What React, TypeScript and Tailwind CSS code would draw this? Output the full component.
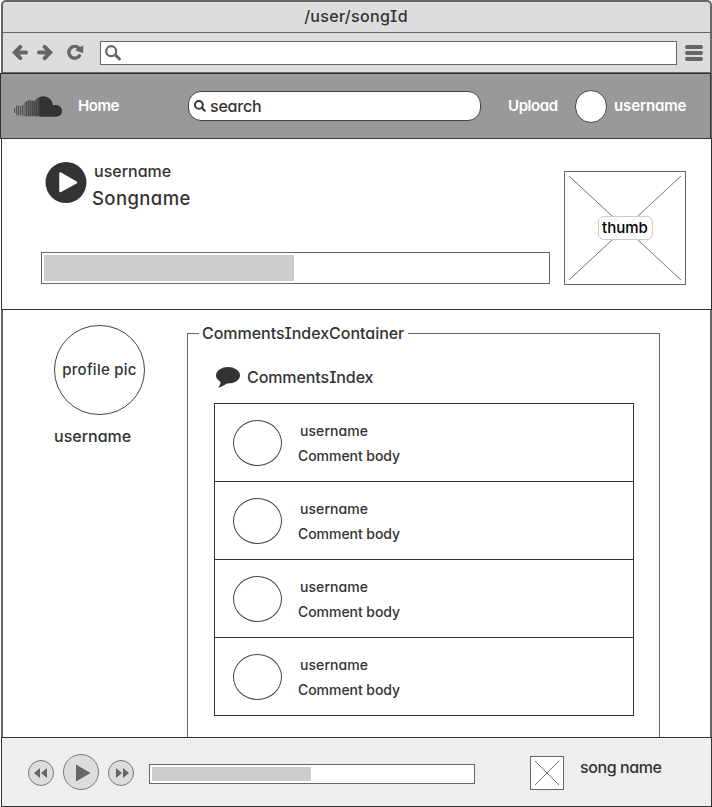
import React from "react";

const inkFont = {
  fontFamily: 'Inter, "Open Sans", sans-serif',
  fontFeatureSettings: '"cv11", "cv08", "kern"',
};

function Label({ className = "font-medium", children }: { className?: string; children: React.ReactNode }) {
  return <span className={`block whitespace-nowrap ${className}`}>{children}</span>;
}

function TitleBar() {
  return (
    <div className="h-[31px] border-b border-[#666] pt-1 pr-px text-center">
      <Label className="text-base leading-5 font-medium tracking-[0.3px]">/user/songId</Label>
    </div>
  );
}

function Toolbar() {
  return (
    <div className="flex h-10 items-start border-b border-[#666] pt-2 pl-[9px] text-[#666]">
      <svg className="mt-[3px]" width="16" height="17" viewBox="0 0 16 17" fill="none" stroke="currentColor" strokeWidth="4" strokeLinecap="round">
        <path d="M14 8.500H5" />
        <path d="M8.300 2.900 2.800 8.500l5.500 5.600" />
      </svg>
      <svg className="mt-[3px] ml-[9px]" width="16" height="17" viewBox="0 0 16 17" fill="none" stroke="currentColor" strokeWidth="4" strokeLinecap="round">
        <path d="M2 8.500h9" />
        <path d="m7.700 2.900 5.500 5.600-5.500 5.600" />
      </svg>
      <svg className="mt-[3px] ml-[14px]" width="17" height="17" viewBox="0 0 17 17">
        <path d="M12.500 11.800A5.900 5.900 0 1 1 12 4.200" fill="none" stroke="currentColor" strokeWidth="3.400" strokeLinecap="round" />
        <path d="M16.200 1.300v7.900L8 6.200z" fill="currentColor" />
      </svg>
      <div className="ml-4 h-6 w-[577px] border border-[#666] bg-white pt-[3px] pl-1">
        <svg width="17" height="17" viewBox="0 0 17 17" fill="none" stroke="currentColor" strokeLinecap="round">
          <circle cx="6.200" cy="6.200" r="5" strokeWidth="2.200" />
          <path d="m10.500 10.200 4 3.800" strokeWidth="3" />
        </svg>
      </div>
      <div className="mt-1 ml-2 flex flex-col gap-0.5">
        {[0, 1, 2].map((n) => (
          <div key={n} className="h-1 w-[18px] rounded-full bg-[#666]" />
        ))}
      </div>
    </div>
  );
}

function CloudLogo() {
  const bars = [
    [12, 17], [9.5, 19], [9.5, 19.5], [10, 19.5], [9, 19.5],
  ];
  return (
    <svg className="mt-[22px] ml-[13px]" width="48" height="21" viewBox="0 0 48 21">
      <defs>
        <linearGradient id="wave" x1="0" x2="1">
          <stop offset="0" stopColor="#707070" />
          <stop offset="1" stopColor="#4c4c4c" />
        </linearGradient>
      </defs>
      <path d="M9.500 8.500 11 6C14 3.800 17 4 20.500 5.300L22.500 2.800 26 1V20.300H9.500Z" fill="url(#wave)" />
      {bars.map(([top, bottom], i) => (
        <rect key={i} x={i * 2 + 0.2} y={top} width="1" height={bottom - top} fill="#444" />
      ))}
      <path d="M12.500 5.500V20.300M14.500 4.600V20.300M16.500 4.300V20.300M18.500 4.500V20.300M20.500 5V20.300M22.500 2.800V20.300M24.500 1.600V20.300" stroke="#444" strokeWidth="0.700" />
      <path d="M25.500 1C32 -1.400 38.300 2.500 39 9.400C44 7.900 48 11 48 15C48 18.500 45.500 20.700 42 20.700H25.500Z" fill="#333" />
    </svg>
  );
}

function Header() {
  return (
    <header className="-ml-[3px] flex h-[66px] w-[711px] shrink-0 items-start border border-[#333] bg-[#999] text-white">
      <CloudLogo />
      <Label className="mt-[22px] ml-4 w-[110px] text-[15px] leading-5 font-semibold tracking-[-0.45px]">Home</Label>
      <div className="mt-[17px] flex h-[30px] w-[293px] rounded-[13px] border border-[#444] bg-white pl-[5px] text-[#333]">
        <svg className="mt-2" width="12" height="12" viewBox="0 0 12 12" fill="none" stroke="currentColor" strokeWidth="2" strokeLinecap="round">
          <circle cx="4.900" cy="4.900" r="3.900" />
          <path d="m8 8 2.800 2.700" />
        </svg>
        <Label className="mt-1 ml-1 text-base leading-5 font-medium tracking-[-0.2px]">search</Label>
      </div>
      <Label className="mt-[22px] ml-[27px] w-[67px] text-[15px] leading-5 font-semibold tracking-[-0.4px]">Upload</Label>
      <div className="mt-4 h-[33px] w-8 rounded-full border border-[#444] bg-white" />
      <Label className="mt-[22px] ml-[7px] text-[15px] leading-5 font-semibold tracking-[-0.12px]">username</Label>
    </header>
  );
}

function SongPanel() {
  return (
    <section className="-mt-px -ml-[2px] flex h-[172px] w-[711px] shrink-0 border border-[#333] bg-white">
      <div className="ml-[39px] w-[509px] shrink-0">
        <div className="flex h-[113px]">
          <svg className="mt-[22px] ml-1" width="42" height="42" viewBox="0 0 42 42">
            <circle cx="21" cy="21.500" r="20.500" fill="#333" />
            <path d="M15.500 12.500v17.500L31 21.500z" fill="#fff" stroke="#fff" strokeWidth="2.500" strokeLinejoin="round" />
          </svg>
          <div className="ml-[5px] pt-[22px]">
            <Label className="ml-0.5 text-base leading-5 font-medium">username</Label>
            <Label className="mt-[5px] text-[18.5px] leading-6 font-medium tracking-[0.4px]">Songname</Label>
          </div>
        </div>
        <div className="h-8 border border-[#666] p-0.5">
          <div className="h-[26px] w-[250px] bg-[#ccc]" />
        </div>
      </div>
      <div className="relative mt-8 ml-[14px] h-[114px] w-[122px] border border-[#666]">
        <svg width="120" height="112" viewBox="0 0 120 112" stroke="#777" strokeWidth="1">
          <path d="M4 4 116 108M116 4 4 108" />
        </svg>
        <div className="absolute top-[44px] left-[33px] flex h-6 w-[55px] justify-center rounded-md border border-[#ccc] bg-white/80 text-black">
          <Label className="-ml-px text-[15px] leading-[22px] font-medium">thumb</Label>
        </div>
      </div>
    </section>
  );
}

function Comment() {
  return (
    <li className="flex h-[78px] border-b border-[#333]">
      <div className="mt-4 ml-[18px] h-[46px] w-[49px] rounded-[50%] border border-[#444]" />
      <div className="ml-4 pt-[17px] text-sm leading-5">
        <Label className="ml-0.5 font-medium tracking-[0.08px]">username</Label>
        <Label className="mt-[5px] font-medium tracking-[-0.05px]">Comment body</Label>
      </div>
    </li>
  );
}

function Comments() {
  return (
    <div className="ml-[41px] w-[473px] pt-[13px]">
      <div className="flex h-2.5 items-start">
        <div className="mt-2.5 h-px w-3 bg-[#666]" />
        <Label className="ml-[3px] w-[206px] text-base leading-5 font-medium tracking-[-0.03px]">CommentsIndexContainer</Label>
        <div className="mt-2.5 h-px grow bg-[#666]" />
      </div>
      <div className="h-[404px] border-x border-[#666] pl-[26px]">
        <div className="flex h-[70px] pt-[34px]">
          <svg className="ml-0.5" width="25" height="21" viewBox="0 0 25 21" fill="#333">
            <ellipse cx="12" cy="8.300" rx="12" ry="8.300" />
            <path d="M4.500 13C5 16.500 4 18.500 2 20.500C6.500 19.500 9 18 12 15.500Z" />
          </svg>
          <Label className="ml-1.5 text-base leading-5 font-medium tracking-[-0.08px]">CommentsIndex</Label>
        </div>
        <ul className="w-[420px] border-x border-t border-[#333]">
          <Comment />
          <Comment />
          <Comment />
          <Comment />
        </ul>
      </div>
    </div>
  );
}

function Body() {
  return (
    <main className="flex h-[427px] shrink-0 bg-white">
      <aside className="ml-[51px] w-[92px] pt-[15px]">
        <div className="flex h-[90px] w-[91px] items-center justify-center rounded-full border border-[#444]">
          <Label className="text-[15px] leading-5 font-medium tracking-[0.25px]">profile pic</Label>
        </div>
        <Label className="mt-[11px] text-base leading-5 font-medium">username</Label>
      </aside>
      <Comments />
    </main>
  );
}

function Player() {
  return (
    <footer className="-ml-[2px] flex h-[70px] w-[711px] shrink-0 items-start border border-[#333] bg-[#eee]">
      <svg className="mt-[22px] ml-[26px]" width="26" height="26" viewBox="0 0 26 26">
        <circle cx="13" cy="13" r="12.500" fill="#ddd" stroke="#777" />
        <path d="M12 8v10L6 13zM19 8v10L13 13z" fill="#666" />
      </svg>
      <svg className="mt-4 ml-[9px]" width="36" height="36" viewBox="0 0 36 36">
        <circle cx="18" cy="18" r="17.500" fill="#ddd" stroke="#777" />
        <path d="M13 10.500v17L27.500 19z" fill="#666" />
      </svg>
      <svg className="mt-[22px] ml-[9px]" width="26" height="26" viewBox="0 0 26 26">
        <circle cx="13" cy="13" r="12.500" fill="#ddd" stroke="#777" />
        <path d="M8 8v10l6-5zM15 8v10l6-5z" fill="#666" />
      </svg>
      <div className="mt-[26px] ml-[15px] h-5 w-[326px] border border-[#666] bg-white p-0.5">
        <div className="h-3.5 w-[159px] bg-[#ccc]" />
      </div>
      <div className="mt-[18px] ml-[55px] size-[34px] border border-[#666] bg-white">
        <svg width="32" height="32" viewBox="0 0 32 32" stroke="#777">
          <path d="M4 4 28 28M28 4 4 28" />
        </svg>
      </div>
      <Label className="mt-[19px] ml-4 text-base leading-5 font-medium tracking-[-0.4px]">song name</Label>
    </footer>
  );
}

export default function App() {
  return (
    <div className="h-[807px] w-[712px] overflow-hidden bg-white pl-px text-[#333]" style={inkFont}>
      <div className="flex h-[807px] w-[711px] flex-col rounded-t-[5px] border-x-2 border-t-2 border-[#666] bg-[#ddd]">
        <TitleBar />
        <Toolbar />
        <Header />
        <SongPanel />
        <Body />
        <Player />
      </div>
    </div>
  );
}
